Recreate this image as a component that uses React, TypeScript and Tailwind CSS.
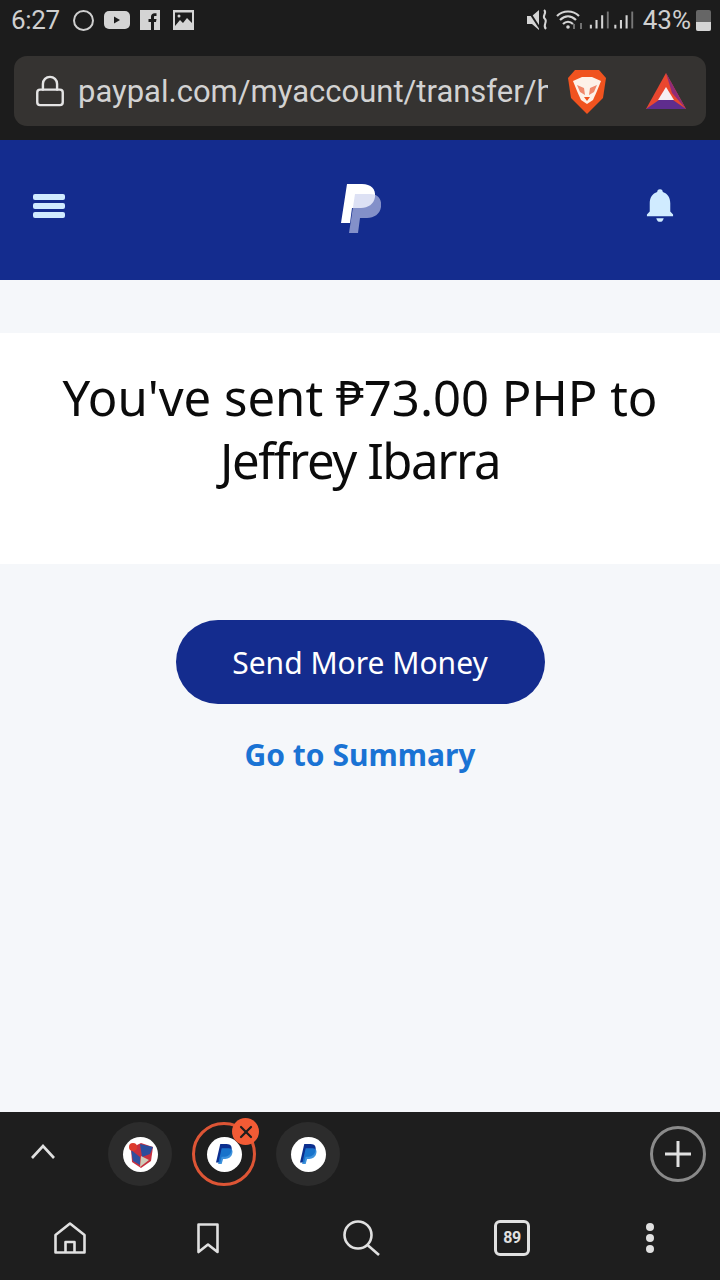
import { X, Lock } from "lucide-react";

const PayPalMark = ({ className }: { className?: string }) => (
  <svg viewBox="0 0 40 49" className={className}>
    <path d="M6 0H21C30 0 35 5 34 13C33 20 27 24 20 24H11L9 39H0Z" fill="#ffffff" />
    <path d="M14 10H29C37 10 41 15 40 23C39 30 33 34 26 34H19L17 49H8Z" fill="#c8cfee" fillOpacity="0.62" />
  </svg>
);

const SmallPayPal = () => (
  <svg viewBox="0 0 24 28" className="h-[20px] w-[17px]">
    <path d="M6 0H15C21 0 23 4 22 9C21 15 16 18 11 18H8L6 26H0Z" fill="#0c2f8f" />
    <path d="M8 6H18C23 6 24 10 23 13C22 18 18 21 13 21H10L8 28H3Z" fill="#1b7fd6" fillOpacity="0.85" />
  </svg>
);

const StatusBar = () => (
  <div className="flex h-[40px] items-center justify-between pl-[11px] pr-[9px] text-[#cfcfcf]">
    <div className="flex items-center">
      <span className="text-[26px] leading-none tracking-[-0.3px]">6:27</span>
      <span className="ml-[13px] h-[21px] w-[21px] rounded-full border-2 border-[#cfcfcf]" />
      <svg viewBox="0 0 26 18" className="ml-[10px] h-[18px] w-[26px]">
        <rect width="26" height="18" rx="5" fill="#d4d4d4" />
        <path d="M10 5.500L16 9L10 12.500Z" fill="#1c1c1c" />
      </svg>
      <svg viewBox="0 0 20 20" className="ml-[10px] h-[20px] w-[20px]">
        <rect width="20" height="20" fill="#d4d4d4" />
        <path d="M11 20V12H8.500V9H11V6.500C11 4.500 12.500 3.200 14.500 3.200H16.500V6H15C14.200 6 14 6.400 14 7V9H16.500L16 12H14V20Z" fill="#1c1c1c" />
      </svg>
      <svg viewBox="0 0 21 20" className="ml-[13px] h-[20px] w-[21px]">
        <rect width="21" height="20" fill="#d4d4d4" />
        <rect x="2" y="2.500" width="17" height="15" fill="#1c1c1c" />
        <circle cx="6" cy="6" r="1.500" fill="#d4d4d4" />
        <path d="M2 16L7 10L10 13L14 8L19 13V18H2Z" fill="#d4d4d4" />
      </svg>
    </div>
    <div className="flex items-center">
      <svg viewBox="0 0 24 24" className="h-[24px] w-[24px]">
        <path d="M1 8H6L13 2V22L6 16H1Z" fill="#d4d4d4" />
        <path d="M2 2L15 22" stroke="#1c1c1c" strokeWidth="2" />
        <path d="M18 2C22 5 15 8 19 11C22 14 16 17 20 21" stroke="#d4d4d4" strokeWidth="2" fill="none" />
      </svg>
      <svg viewBox="0 0 30 22" className="ml-[6px] h-[22px] w-[30px]">
        <path d="M1 7C7 1 17 1 23 7M4 11C9 6 15 6 20 11M7 15C10 12 14 12 17 15" stroke="#d4d4d4" strokeWidth="2.200" fill="none" />
        <circle cx="12" cy="18" r="1.800" fill="#d4d4d4" />
        <path d="M18 15V20M25 14V20" stroke="#8c8c8c" strokeWidth="1.500" />
      </svg>
      <svg viewBox="0 0 50 20" className="ml-[3px] h-[20px] w-[47px]">
        <path d="M2 15V19M8 10V19M14 5V19" stroke="#d4d4d4" strokeWidth="2.200" />
        <path d="M20 1V19" stroke="#777777" strokeWidth="2" />
        <path d="M28 15V19M34 10V19M40 5V19" stroke="#d4d4d4" strokeWidth="2.200" />
        <path d="M46 1V19" stroke="#777777" strokeWidth="2" />
      </svg>
      <span className="ml-[7px] text-[26px] leading-none">43%</span>
      <div className="ml-[5px] flex h-[21px] w-[15px] flex-col justify-end rounded-[2px] bg-[#666666]">
        <div className="h-[9px] rounded-b-[2px] bg-[#d4d4d4]" />
      </div>
    </div>
  </div>
);

const UrlBar = () => (
  <div className="mx-[14px] mt-[16px] flex h-[70px] items-center rounded-[13px] bg-[#353331] pl-[19px] pr-[19px]">
    <Lock className="h-[36px] w-[34px] shrink-0 text-[#e4e4e4]" strokeWidth={1.7} />
    <div className="ml-[11px] mt-[2px] w-[470px] overflow-hidden whitespace-nowrap text-[31px] leading-[40px] text-[#d2d2d2]">
      paypal.com/myaccount/transfer/h
    </div>
    <svg viewBox="0 0 40 46" className="ml-[19px] h-[46px] w-[40px] shrink-0">
      <path d="M8 2H32L39 10L36 30L20 46L4 30L1 10Z" fill="#f0531f" />
      <path d="M6 13L15 9H25L34 13L30 23L26 32L20 36L14 32L10 23Z" fill="#fdf1e8" />
      <path d="M10 17L17 20L18 27L13 24ZM30 17L23 20L22 27L27 24Z" fill="#f0876a" />
      <path d="M17 29H23L20 33Z" fill="#f0531f" />
    </svg>
    <svg viewBox="0 0 40 36" className="ml-[39px] h-[36px] w-[40px] shrink-0">
      <path d="M20 0L40 36H0Z" fill="#e9472f" />
      <path d="M20 0L40 36L26 20Z" fill="#8f2b78" />
      <path d="M0 36L13 27H27L40 36Z" fill="#5f2d8e" />
      <path d="M20 14L28 27H12Z" fill="#f6eef2" />
    </svg>
  </div>
);

const AppHeader = () => (
  <div className="flex h-[140px] items-center justify-between bg-[#142c8e] pb-[8px] pl-[33px] pr-[46px]">
    <div className="flex flex-col gap-[3px]">
      <span className="h-[6px] w-[32px] rounded-[2px] bg-[#d0ebff]" />
      <span className="h-[6px] w-[32px] rounded-[2px] bg-[#d0ebff]" />
      <span className="h-[6px] w-[32px] rounded-[2px] bg-[#d0ebff]" />
    </div>
    <PayPalMark className="ml-[10px] mt-[4px] h-[49px] w-[40px]" />
    <svg viewBox="0 0 30 36" className="h-[36px] w-[28px]">
      <path d="M15 0C17 0 18 1.500 18 3C23 4.500 26 9 26 15V24L29 27V29H1V27L4 24V15C4 9 7 4.500 12 3C12 1.500 13 0 15 0Z" fill="#d0ebff" />
      <path d="M11 31H19C18 34 17 35 15 35C13 35 12 34 11 31Z" fill="#d0ebff" />
    </svg>
  </div>
);

const Bubble = ({ children }: { children: React.ReactNode }) => (
  <div className="flex h-[64px] w-[64px] items-center justify-center rounded-full bg-[#2c2c2c]">
    <div className="flex h-[35px] w-[35px] items-center justify-center rounded-full bg-white">{children}</div>
  </div>
);

const BottomBar = () => (
  <div className="h-[168px] bg-[#1e1e1e] text-[#e0e0e0]">
    <div className="flex h-[84px] items-center pl-[20px] pr-[14px]">
      <svg viewBox="0 0 46 46" className="-mt-[4px] h-[46px] w-[46px]" fill="none" stroke="currentColor" strokeWidth="2.600">
        <path d="M12 29L23 17L34 29" />
      </svg>
      <div className="ml-[42px]">
        <Bubble>
          <svg viewBox="0 0 30 30" className="h-[30px] w-[30px]">
            <path d="M6 9L16 4L28 8L26 22L16 29L7 23Z" fill="#c7303f" />
            <path d="M15 5L28 8L25 15L17 18Z" fill="#2a4c9c" />
            <path d="M6 11L15 18L15 26L8 22Z" fill="#2f4f9f" />
            <path d="M16 17L24 21L15 28Z" fill="#cfcbb8" />
            <circle cx="8" cy="8" r="4" fill="#dd3a2c" />
          </svg>
        </Bubble>
      </div>
      <div className="relative ml-[20px] flex h-[64px] w-[64px] items-center justify-center rounded-full border-[3px] border-[#dd5535]">
        <div className="flex h-[35px] w-[35px] items-center justify-center rounded-full bg-white">
          <SmallPayPal />
        </div>
        <div className="absolute right-[-6px] top-[-7px] flex h-[27px] w-[27px] items-center justify-center rounded-full bg-[#f25b35]">
          <X className="h-[20px] w-[20px] text-[#1e1e1e]" strokeWidth={2.6} />
        </div>
      </div>
      <div className="ml-[20px]">
        <Bubble>
          <SmallPayPal />
        </Bubble>
      </div>
      <div className="ml-auto flex h-[56px] w-[56px] items-center justify-center rounded-full border-[3px] border-[#8a8a8a]">
        <svg viewBox="0 0 26 26" className="h-[26px] w-[26px]" stroke="currentColor" strokeWidth="3">
          <path d="M0 13H26M13 0V26" />
        </svg>
      </div>
    </div>
    <div className="flex h-[84px] items-center pl-[54px]">
      <svg viewBox="0 0 32 32" className="h-[32px] w-[32px]" fill="none" stroke="currentColor" strokeWidth="2.600" strokeLinejoin="round">
        <path d="M1.500 13L16 1.500L30.500 13V30.500H1.500Z" />
        <path d="M11.500 30.500V20H20.500V30.500" />
      </svg>
      <svg viewBox="0 0 22 31" className="ml-[111px] h-[31px] w-[22px]" fill="none" stroke="currentColor" strokeWidth="2.600" strokeLinejoin="round">
        <path d="M1.500 1.500H20.500V29L11 21.500L1.500 29Z" />
      </svg>
      <svg viewBox="0 0 37 36" className="ml-[124px] h-[36px] w-[37px]" fill="none" stroke="currentColor" strokeWidth="2.600">
        <circle cx="15" cy="15" r="13.500" />
        <path d="M24.500 25L36 35" />
      </svg>
      <div className="ml-[114px] flex h-[36px] w-[36px] items-center justify-center rounded-[6px] border-[3px] border-[#e0e0e0] text-[16px] font-bold tracking-tight">
        89
      </div>
      <div className="ml-[116px] flex flex-col gap-[3px]">
        <span className="h-[8px] w-[8px] rounded-full bg-[#e0e0e0]" />
        <span className="h-[8px] w-[8px] rounded-full bg-[#e0e0e0]" />
        <span className="h-[8px] w-[8px] rounded-full bg-[#e0e0e0]" />
      </div>
    </div>
  </div>
);

export default function App() {
  return (
    <div className="flex h-[1280px] w-[720px] flex-col overflow-hidden bg-[#f5f7fa] font-['Roboto',sans-serif]">
      <div className="h-[140px] bg-[#1c1c1c]">
        <StatusBar />
        <UrlBar />
      </div>
      <AppHeader />
      <div className="flex-1 font-['Noto_Sans',sans-serif]">
        <div className="mt-[53px] flex h-[231px] items-start justify-center bg-white pt-[33px]">
          <h1 className="text-center text-[49px] font-normal leading-[63px] text-[#0b0b0b]">
            You've sent ₱73.00 PHP to
            <br />
            <span className="tracking-[-1.4px]">Jeffrey Ibarra</span>
          </h1>
        </div>
        <div className="mt-[56px] flex flex-col items-center">
          <button className="h-[84px] w-[369px] rounded-full bg-[#142c8e] text-[30px] text-white">
            Send More Money
          </button>
          <a className="mt-[31px] text-[30px] font-bold leading-[40px] text-[#1a73d4]">Go to Summary</a>
        </div>
      </div>
      <BottomBar />
    </div>
  );
}
